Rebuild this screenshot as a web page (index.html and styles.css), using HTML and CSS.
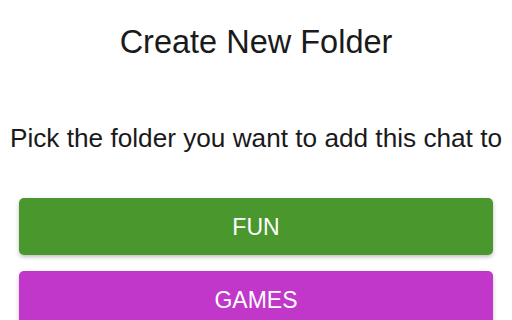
FILE: index.html
```html
<!DOCTYPE html>
<html lang="en">
<head>
    <meta charset="UTF-8">
    <meta name="viewport" content="width=device-width, initial-scale=1.0">
    <title>Create New Folder</title>
    <link rel="stylesheet" href="styles.css">
</head>
<body>
    <div class="folder-container">
        <h1>Create New Folder</h1>
        <p class="folder-hint">Pick the folder you want to add this chat to</p>

        <div class="folder-list">
            <button class="folder-button fun">FUN</button>
            <button class="folder-button games">GAMES</button>
        </div>
    </div>
</body>
</html>
```

FILE: styles.css
```css
* {
    box-sizing: border-box;
    font-family: 'Liberation Sans', Arial, sans-serif;
}

body {
    margin: 0;
    background-color: white;
    overflow: hidden;
}

.folder-container {
    padding: 0 19px;
}

h1 {
    font-weight: 400;
    font-size: 32.5px;
    line-height: 36px;
    text-align: center;
    color: #1a1a1a;
    margin: 24px 0 0;
}

p.folder-hint {
    font-size: 26.2px;
    line-height: 30px;
    text-align: center;
    color: #1a1a1a;
    white-space: nowrap;
    margin: 63px -19px 0;
}

.folder-list {
    display: flex;
    flex-direction: column;
    gap: 16px;
    margin-top: 45px;
}

.folder-button {
    width: 100%;
    height: 57px;
    border: none;
    border-radius: 5px;
    color: white;
    font-size: 23px;
    padding-top: 2px;
    box-shadow: 0 2px 4px rgba(0, 0, 0, 0.25);
    cursor: pointer;
}

.folder-button.fun {
    background-color: #4a972e;
}

.folder-button.games {
    background-color: #c037ca;
}
```
